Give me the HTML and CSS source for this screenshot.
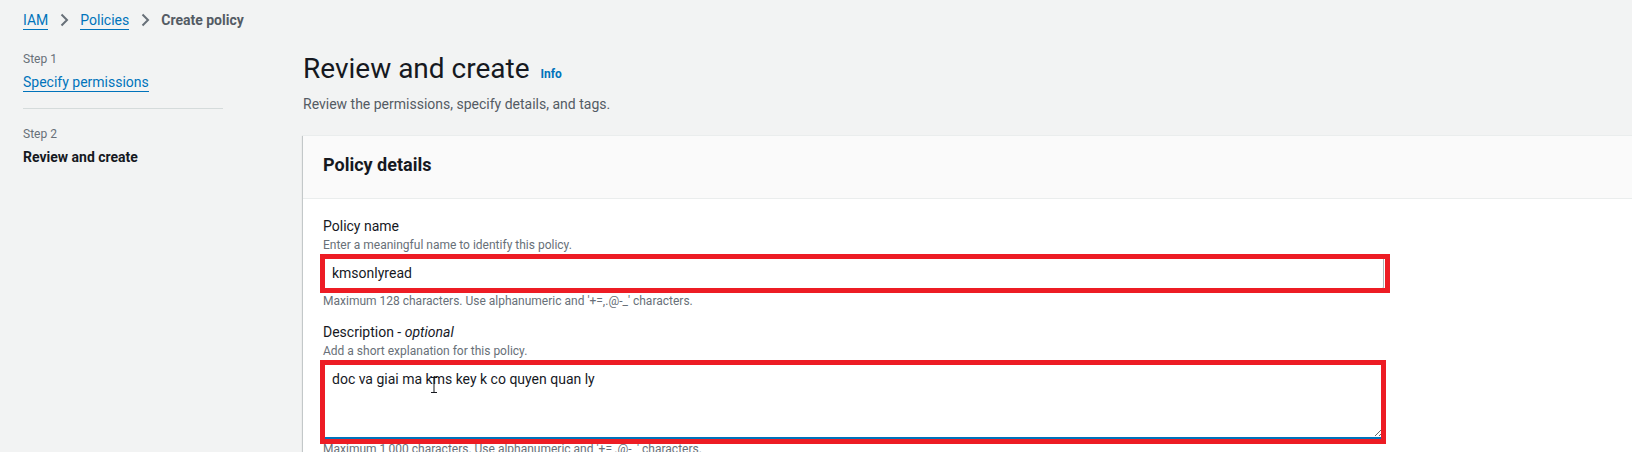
FILE: index.html
```html
<!DOCTYPE html>
<html lang="en">
<head>
<meta charset="utf-8">
<title>Create policy</title>
<link rel="stylesheet" href="styles.css">
</head>
<body>
<nav class="breadcrumbs">
  <a class="crumb-link" href="#">IAM</a>
  <svg class="chev" width="16" height="16" viewBox="0 0 16 16"><path d="M5.5 2.5l5.5 5.5-5.5 5.5" fill="none" stroke="#687078" stroke-width="2"/></svg>
  <a class="crumb-link" href="#">Policies</a>
  <svg class="chev" width="16" height="16" viewBox="0 0 16 16"><path d="M5.5 2.5l5.5 5.5-5.5 5.5" fill="none" stroke="#687078" stroke-width="2"/></svg>
  <span class="crumb-current">Create policy</span>
</nav>
<div class="layout">
  <aside class="steps">
    <div class="step-num">Step 1</div>
    <a class="step-link" href="#">Specify permissions</a>
    <hr class="step-divider">
    <div class="step-num">Step 2</div>
    <div class="step-current">Review and create</div>
  </aside>
  <main class="main">
    <h1 class="title">Review and create <a class="info" href="#">Info</a></h1>
    <p class="subtitle">Review the permissions, specify details, and tags.</p>
    <section class="card">
      <header class="card-header">
        <h2 class="card-title">Policy details</h2>
      </header>
      <div class="card-body">
        <div class="field">
          <label class="label">Policy name</label>
          <div class="desc">Enter a meaningful name to identify this policy.</div>
          <div class="control">
            <input class="input" type="text" value="kmsonlyread">
            <div class="mark mark-input"></div>
          </div>
          <div class="constraint">Maximum 128 characters. Use alphanumeric and '+=,.@-_' characters.</div>
        </div>
        <div class="field field-2">
          <label class="label">Description - <em>optional</em></label>
          <div class="desc">Add a short explanation for this policy.</div>
          <div class="control">
            <textarea class="textarea">doc va giai ma kms key k co quyen quan ly</textarea>
            <div class="mark mark-textarea"></div>
            <svg class="ibeam" width="8" height="16" viewBox="0 0 8 16"><path d="M1 0.5h6M4 0.5v15M1 15.5h6" fill="none" stroke="#16191f" stroke-width="1"/></svg>
          </div>
          <div class="constraint">Maximum 1,000 characters. Use alphanumeric and '+=,.@-_' characters.</div>
        </div>
      </div>
    </section>
  </main>
</div>
</body>
</html>
```
FILE: styles.css
```css
* { box-sizing: border-box; }
html, body { margin: 0; padding: 0; }
body {
  background: #f2f3f3;
  font-family: Roboto, "Liberation Sans", sans-serif;
  color: #16191f;
  overflow: hidden;
  height: 452px;
}
a { color: #0073bb; text-decoration: none; }

.breadcrumbs {
  height: 40px;
  padding: 0 0 0 23px;
  display: flex;
  align-items: center;
  gap: 6px;
  font-size: 14px;
  line-height: 20px;
}
.crumb-link { border-bottom: 1px solid #0073bb; line-height: 17px; margin-top: 1px; }
.chev { width: 16px; height: 16px; margin: 0 2px; }
.crumb-current { color: #545b64; font-weight: 700; }

.layout { display: flex; }
.steps {
  width: 200px;
  margin-left: 23px;
  padding-top: 11px;
  flex: none;
}
.step-num { font-size: 12px; line-height: 16px; color: #687078; }
.step-link {
  display: inline-block;
  margin-top: 7px;
  font-size: 14px;
  line-height: 17px;
  border-bottom: 1px solid #0073bb;
}
.step-divider {
  border: 0;
  border-top: 1px solid #d5dbdb;
  margin: 16px 0 17px;
}
.step-current { margin-top: 5px; font-size: 14px; line-height: 20px; font-weight: 700; }

.main { flex: 1; margin-left: 80px; margin-right: -20px; }
.title {
  margin: 13px 0 0;
  font-size: 28px;
  line-height: 32px;
  font-weight: 400;
}
.info { font-size: 12px; font-weight: 700; margin-left: 4px; }
.subtitle { margin: 4px 0 0; font-size: 14px; line-height: 20px; color: #545b64; }

.card {
  margin-top: 21px;
  background: #fff;
  border-top: 1px solid #eaeded;
  box-shadow: 0 1px 1px 0 rgba(0,28,36,.3), -1px 1px 1px 0 rgba(0,28,36,.15);
}
.card-header {
  background: #fafafa;
  border-bottom: 1px solid #eaeded;
  padding: 17px 20px 21px;
}
.card-title { margin: 0; font-size: 18px; line-height: 24px; font-weight: 700; }
.card-body { padding: 16px 20px 20px; }

.label { display: block; font-size: 14px; line-height: 22px; }
.label em { font-style: italic; }
.desc { font-size: 12px; line-height: 16px; color: #687078; }
.control { position: relative; margin-top: 4px; width: 1061px; }
.input {
  display: block;
  width: 1061px;
  height: 32px;
  border: 1px solid #aab7b8;
  border-radius: 2px;
  padding: 4px 8px;
  font: 14px/22px Roboto, "Liberation Sans", sans-serif;
  color: #16191f;
  background: #fff;
}
.textarea {
  display: block;
  width: 1061px;
  height: 75px;
  border: 1px solid #0073bb;
  box-shadow: 0 0 0 1px #0073bb;
  border-radius: 2px;
  padding: 4px 8px;
  font: 14px/22px Roboto, "Liberation Sans", sans-serif;
  color: #16191f;
  background: #fff;
  resize: vertical;
  outline: none;
}
.constraint { margin-top: 4px; font-size: 12px; line-height: 16px; color: #687078; }
.field-2 { margin-top: 12px; }
.field-2 .constraint { margin-top: 3px; }

.mark {
  position: absolute;
  border: 5px solid #ed1c24;
  pointer-events: none;
}
.mark-input { top: -3px; left: -3px; right: -6px; bottom: -4px; }
.mark-textarea { top: -3px; left: -3px; right: -2px; bottom: -6px; }
.ibeam { position: absolute; left: 107px; top: 14px; }
```
